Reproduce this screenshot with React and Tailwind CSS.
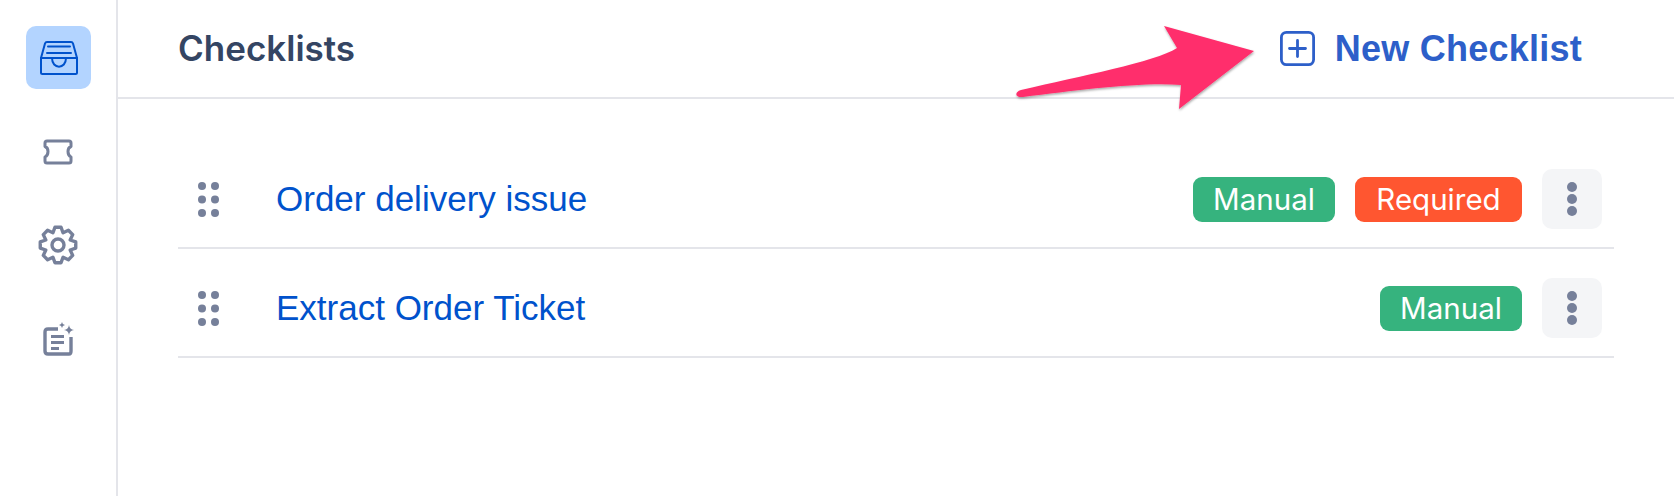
import React from 'react';

const InboxIcon = () => (
  <svg width="40" height="36" viewBox="0 0 40 36" fill="none" stroke="#0052cc" strokeWidth="2" strokeLinecap="round" strokeLinejoin="round">
    <path d="M2 18 L6 3.5 Q6.5 2 8 2 H32 Q33.5 2 34 3.5 L38 18" />
    <path d="M2 18 H38 V32.5 Q38 34 36.5 34 H3.5 Q2 34 2 32.5 Z" />
    <path d="M9 6.5 H31 M8 13 H32" />
    <path d="M13 18 C13 29.5 27 29.5 27 18" />
  </svg>
);

const TicketIcon = () => (
  <svg width="32" height="26" viewBox="0 0 32 26" fill="none" stroke="#76809a" strokeWidth="3" strokeLinejoin="round">
    <path d="M3 4 Q3 2 5 2 H27 Q29 2 29 4 V7.5 C25 9 25 16 29 18 V22 Q29 24 27 24 H5 Q3 24 3 22 V18 C7 16 7 9 3 7.5 Z" />
  </svg>
);

// eight chunky teeth, each tooth is a trapezoid between the two radii
const gearPath = () => {
  const pts = [];
  for (let i = 0; i < 8; i++) {
    const a = (i * Math.PI) / 4 - Math.PI / 2;
    [[-0.39, 13.2], [-0.17, 18], [0.17, 18], [0.39, 13.2]].forEach(([da, r]) => {
      pts.push(`${(20 + r * Math.cos(a + da)).toFixed(2)} ${(20 + r * Math.sin(a + da)).toFixed(2)}`);
    });
  }
  return `M${pts.join(' L')} Z`;
};

const GearIcon = () => (
  <svg width="40" height="40" viewBox="0 0 40 40" fill="none" stroke="#76809a" strokeWidth="3.4" strokeLinejoin="round">
    <path d={gearPath()} />
    <circle cx="20" cy="20" r="6" />
  </svg>
);

const DocIcon = () => (
  <svg width="32" height="34" viewBox="0 0 32 34" fill="none">
    <path d="M15 7 H5 Q2 7 2 10 V29 Q2 32 5 32 H26 Q28 32 28 29 V15" stroke="#76809a" strokeWidth="3.4" />
    <path d="M8 13 H21 V16 H8 Z M8 19 H21 V22 H8 Z M8 25 H16 V28 H8 Z" fill="#76809a" />
    <path d="M26 3 Q26.6 7.4 31 8 Q26.6 8.6 26 13 Q25.4 8.6 21 8 Q25.4 7.4 26 3 Z" fill="#76809a" />
    <path d="M19 0 Q19.3 2.7 22 3 Q19.3 3.3 19 6 Q18.7 3.3 16 3 Q18.7 2.7 19 0 Z" fill="#76809a" />
  </svg>
);

const PlusBox = () => (
  <svg width="35" height="35" viewBox="0 0 35 35" fill="none" stroke="#2d5fc9" strokeWidth="2.8" strokeLinecap="round">
    <rect x="1.4" y="1.4" width="32.2" height="32.2" rx="5" />
    <path d="M9.5 17.5 H25.5 M17.5 9.5 V25.5" />
  </svg>
);

const DragDots = () => (
  <svg width="22" height="35" viewBox="0 0 22 35" fill="#76809a">
    <circle cx="4" cy="4" r="4" />
    <circle cx="17" cy="4" r="4" />
    <circle cx="4" cy="17.5" r="4" />
    <circle cx="17" cy="17.5" r="4" />
    <circle cx="4" cy="31" r="4" />
    <circle cx="17" cy="31" r="4" />
  </svg>
);

const MoreDots = () => (
  <svg width="10" height="34" viewBox="0 0 10 34" fill="#76809a">
    <circle cx="5" cy="5" r="5" />
    <circle cx="5" cy="17" r="5" />
    <circle cx="5" cy="29" r="5" />
  </svg>
);

const Arrow = () => (
  <svg className="absolute left-[1010px] top-[20px] pointer-events-none" width="250" height="96" viewBox="0 0 250 96">
    <defs>
      <filter id="arrowShadow" x="-10%" y="-10%" width="120%" height="130%">
        <feDropShadow dx="0.5" dy="1.5" stdDeviation="1.2" floodColor="#000" floodOpacity="0.35" />
      </filter>
    </defs>
    <path
      d="M11 70 C70 56 145 42 167 28 L154 6 L244 31 L169 89 L171 65 C130 62 70 70 13 77 C5 78 4 72 11 70 Z"
      fill="#ff2e6c"
      filter="url(#arrowShadow)"
    />
  </svg>
);

const Badge = ({ className, children }) => (
  <span className={`h-[45px] rounded-[9px] flex items-center justify-center text-white text-[29.5px] font-['Inter',sans-serif] ${className}`}>
    {children}
  </span>
);

const rows = [
  { name: 'Order delivery issue', required: true },
  { name: 'Extract Order Ticket', required: false },
];

export default function App() {
  return (
    <div className="relative w-[1674px] h-[496px] bg-white flex overflow-hidden">
      <aside className="w-[118px] shrink-0 border-r-2 border-[#e4e5ea] flex flex-col items-center pt-[26px]">
        <div className="w-[65px] h-[63px] rounded-[10px] bg-[#b3d4ff] flex items-center justify-center ml-[1px]">
          <InboxIcon />
        </div>
        <div className="mt-[50px] h-[26px] flex items-center"><TicketIcon /></div>
        <div className="mt-[60px] h-[40px] flex items-center"><GearIcon /></div>
        <div className="mt-[57px] ml-[2px] h-[34px] flex items-center"><DocIcon /></div>
      </aside>

      <main className="flex-1 min-w-0">
        <header className="h-[99px] border-b-2 border-[#e4e5ea] pl-[60px] pr-[92px] flex items-center justify-between">
          <h1 className="text-[35px] font-semibold text-[#344563] font-['Inter',sans-serif]">Checklists</h1>
          <button className="flex items-center gap-[20px]">
            <PlusBox />
            <span className="text-[36px] font-bold tracking-[0.25px] text-[#2d5fc9] font-['Liberation_Sans',sans-serif]">New Checklist</span>
          </button>
        </header>

        <ul className="ml-[60px] mr-[60px] mt-[41px]">
          {rows.map((row) => (
            <li key={row.name} className="h-[109px] border-b-2 border-[#e4e5ea] flex items-center pl-[20px] pr-[12px] pt-[11px]">
              <DragDots />
              <a className="ml-[56px] text-[35px] text-[#0052cc] font-['Liberation_Sans',sans-serif]">{row.name}</a>
              <div className="ml-auto flex items-center gap-[20px]">
                <Badge className="w-[142px] bg-[#36b37e]">Manual</Badge>
                {row.required && <Badge className="w-[167px] bg-[#ff5630]">Required</Badge>}
                <button className="w-[60px] h-[60px] rounded-[10px] bg-[#f4f5f7] flex items-center justify-center">
                  <MoreDots />
                </button>
              </div>
            </li>
          ))}
        </ul>
      </main>

      <Arrow />
    </div>
  );
}
